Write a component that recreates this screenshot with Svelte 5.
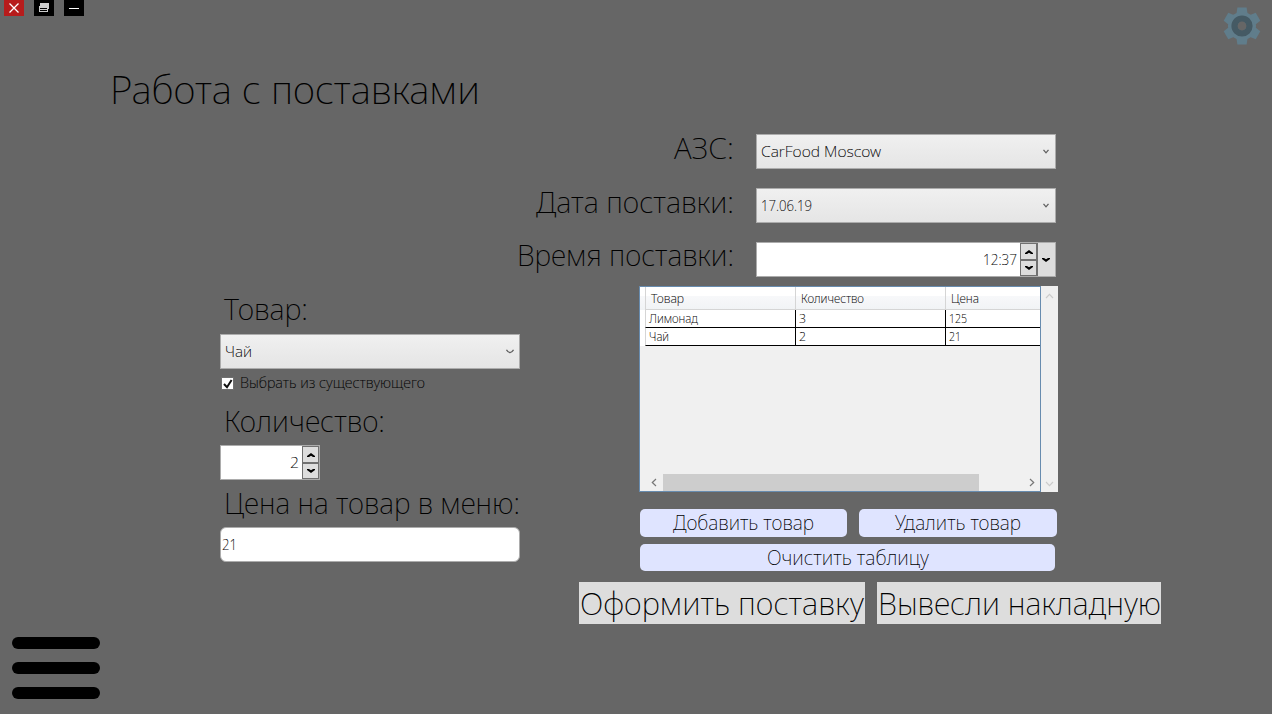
<script>
  let checked = $state(true);
  const supply = [
    { label: 'АЗС:', size: 30, width: 60, base: 25.3, value: 'CarFood Moscow', vw: 120 },
    { label: 'Дата поставки:', size: 30, width: 198, base: 25.3, value: '17.06.19', vw: 51 },
  ];
  const rows = [
    [['Лимонад', 49], ['3', 7], ['125', 18]],
    [['Чай', 20], ['2', 7], ['21', 12]],
  ];
</script>

{#snippet line(text, size, width, base, height)}
  <svg class="line" class:small={size < 16} {width} {height}><text x="0" y={base} font-size={size} textLength={width} lengthAdjust="spacingAndGlyphs">{text}</text></svg>
{/snippet}

{#snippet arrow(dir)}
  <svg class="arrow" width="8" height="4" viewBox="0 0 8 4">
    <path d={dir === 'up' ? 'M0 4V3L4 0L8 3V4H6L4 2.7L2 4Z' : 'M0 0V1L4 4L8 1V0H6L4 1.3L2 0Z'} fill="#000" />
  </svg>
{/snippet}

{#snippet spinner()}
  <div class="spin">
    <button aria-label="+">{@render arrow('up')}</button>
    <button aria-label="-">{@render arrow('down')}</button>
  </div>
{/snippet}

<div class="window">
  <header>
    <div class="controls">
      <button class="close" aria-label="×"><svg width="20" height="16"><path d="M5.5 3.5L14.5 12.5M14.5 3.5L5.5 12.5" stroke="#fff" stroke-width="1.3" /></svg></button>
      <button aria-label="□"><svg width="20" height="16"><path d="M6 3H15V9H14V12H5V6H6Z" fill="#ccc" /><path d="M6 8H13V9H6ZM6 10H13V11H6Z" fill="#000" /></svg></button>
      <button aria-label="_"><svg width="20" height="16"><path d="M5 8.5H15" stroke="#fff" /></svg></button>
    </div>
    <svg class="gear" width="38" height="38" viewBox="-19 -19 38 38">
      <g fill="#607d8b">
        <circle r="14" />
        {#each [0, 60, 120, 180, 240, 300] as a}
          <path d="M-4.6 -18.5H4.6L5.6 -12H-5.6Z" transform="rotate({a})" />
        {/each}
      </g>
      <circle r="7.3" fill="none" stroke="#455a64" stroke-width="6.6" />
      <circle r="4.4" fill="#666" />
    </svg>
  </header>

  <h1>{@render line('Работа с поставками', 39.5, 370, 44, 60)}</h1>

  <section class="supply">
    {#each supply as f}
      <div class="field">
        {@render line(f.label, f.size, f.width, f.base, 35)}
        <div class="combo">
          {@render line(f.value, 15, f.vw, 22, 33)}
          <svg class="chev" width="6" height="5"><path d="M.5 .8L3 3.8L5.5 .8" fill="none" stroke="#606060" stroke-width="1.3" /></svg>
        </div>
      </div>
    {/each}
    <div class="field">
      {@render line('Время поставки:', 30, 217, 24.3, 35)}
      <div class="time">
        {@render line('12:37', 15, 34, 22, 33)}
        {@render spinner()}
        <button class="drop" aria-label="▾">{@render arrow('down')}</button>
      </div>
    </div>
  </section>

  <div class="columns">
    <section class="product">
      <div class="label first">{@render line('Товар:', 30, 84, 34.4, 48)}</div>
      <div class="combo">
        {@render line('Чай', 15, 27, 22, 33)}
        <svg class="chev" width="8" height="5"><path d="M.5 .8Q2 3.4 4 3.6Q6 3.4 7.5 .8" fill="none" stroke="#606060" stroke-width="1.2" /></svg>
      </div>
      <button class="check" onclick={() => (checked = !checked)}>
        <span class="box">{#if checked}<svg width="12" height="12"><path d="M2 6L5 9.2L9.6 2" fill="none" stroke="#111" stroke-width="2" /></svg>{/if}</span>
        {@render line('Выбрать из существующего', 14, 185, 18, 28)}
      </button>
      <div class="label qty">{@render line('Количество:', 30, 161, 35.4, 48)}</div>
      <div class="number">
        {@render line('2', 15, 9, 22, 33)}
        {@render spinner()}
      </div>
      <div class="label">{@render line('Цена на товар в меню:', 30, 296, 34.4, 47)}</div>
      <div class="input">{@render line('21', 15, 15, 22, 33)}</div>
    </section>

    <section class="order">
      <div class="gridbox">
        <div class="grid">
          <div class="row head">
            <div class="cell">{@render line('Товар', 12, 33, 16, 22)}</div>
            <div class="cell">{@render line('Количество', 12, 63, 16, 22)}</div>
            <div class="cell">{@render line('Цена', 12, 28, 16, 22)}</div>
          </div>
          {#each rows as r}
            <div class="row">
              {#each r as [text, w]}
                <div class="cell">{@render line(text, 12, w, 13, 17)}</div>
              {/each}
            </div>
          {/each}
          <div class="hscroll">
            <svg width="6" height="9"><path d="M5 1L1.3 4.5L5 8" fill="none" stroke="#777" stroke-width="1.2" /></svg>
            <div class="track"><div class="thumb"></div></div>
            <svg width="6" height="9"><path d="M1 1L4.7 4.5L1 8" fill="none" stroke="#777" stroke-width="1.2" /></svg>
          </div>
        </div>
        <div class="vscroll">
          <svg width="9" height="6"><path d="M1 5L4.5 1.3L8 5" fill="none" stroke="#ccc" stroke-width="1.2" /></svg>
          <svg width="9" height="6"><path d="M1 1L4.5 4.7L8 1" fill="none" stroke="#ccc" stroke-width="1.2" /></svg>
        </div>
      </div>
      <div class="actions">
        <button class="add">{@render line('Добавить товар', 19.5, 141, 21.4, 28)}</button>
        <button class="remove">{@render line('Удалить товар', 19.5, 126, 21.4, 28)}</button>
        <button class="clear">{@render line('Очистить таблицу', 19.5, 162, 21.4, 27)}</button>
      </div>
      <div class="final">
        <button class="submit">{@render line('Оформить поставку', 32, 284, 32.5, 42)}</button>
        <button class="print">{@render line('Вывесли накладную', 32, 283, 32.5, 42)}</button>
      </div>
    </section>
  </div>

  <button class="burger" aria-label="≡"><i></i><i></i><i></i></button>
</div>

<style>
  :global(body) { margin: 0; background: #666; }
  * { box-sizing: border-box; }
  button { padding: 0; border: 0; background: none; font: inherit; display: flex; align-items: center; justify-content: center; }
  svg { display: block; flex: none; }
  .window { position: relative; width: 1272px; height: 714px; overflow: hidden; background: #666; font-family: "Noto Sans", "Open Sans", sans-serif; font-weight: 200; color: #000; }
  .line { overflow: visible; }
  .small { stroke: #000; stroke-width: 0.1px; }
  header { display: flex; justify-content: space-between; height: 60px; padding: 0 12px 0 4px; }
  .controls { display: flex; gap: 10px; height: 16px; }
  .controls button { width: 20px; height: 16px; background: #000; }
  .controls .close { background: #b71c1c; }
  .gear { margin: 6.5px -0.5px 0 0; }
  h1 { margin: 0; height: 74px; padding-left: 110px; font-weight: 200; }
  .supply { display: grid; gap: 19px; width: 1056px; }
  .field { display: flex; justify-content: flex-end; gap: 22px; height: 35px; }
  .combo { display: flex; justify-content: space-between; width: 300px; height: 35px; padding: 0 6px 0 4px; border: 1px solid #acacac; background: linear-gradient(#f0f0f0, #e5e5e5); }
  .product .combo { padding-right: 5px; }
  .chev { margin-top: 14px; }
  .time, .number { display: flex; justify-content: flex-end; height: 35px; border: 1px solid #acacac; background: #fff; }
  .time { width: 300px; }
  .number { width: 100px; }
  .spin { display: grid; grid-template-rows: 17px 16px; width: 17px; margin-left: 3px; background: #707070; }
  .spin button { background: #ddd; border: 1px solid #707070; }
  .drop { width: 18px; border-left: 1px solid #707070; background: #ddd; }
  .drop .arrow, .drop :global(svg) { margin-right: 1px; }
  .columns { display: flex; gap: 58px; margin: 9px 0 0 220px; }
  .product { width: 300px; }
  .label { height: 47px; padding-left: 4px; }
  .first { height: 48px; }
  .qty { height: 48px; margin-top: -1px; }
  .check { height: 29px; gap: 6px; padding-left: 1px; justify-content: flex-start; }
  .box { width: 13px; height: 13px; margin-top: -1px; border: 1px solid #707070; background: #fff; }
  .input { height: 35px; padding-left: 1px; border: 1px solid #acacac; border-radius: 6px; background: #fff; }
  .order { width: 584px; }
  .gridbox { display: flex; width: 419px; height: 206px; margin-left: 61px; }
  .grid { display: flex; flex-direction: column; width: 402px; height: 206px; border: 1px solid #688caf; background: #f0f0f0; overflow: hidden; }
  .row { display: grid; grid-template-columns: 150px 150px 95px; height: 18px; padding-left: 5px; background: #fff; }
  .cell { border-left: 1px solid #000; border-bottom: 1px solid #000; padding-left: 3px; }
  .row .cell:first-child { border-left-color: #d5d5d5; }
  .head { height: 23px; background: linear-gradient(#fff 0 40%, #f7f8fa 41%, #f1f3f5); }
  .head .cell { padding-left: 5px; border-color: #d5d5d5; }
  .hscroll { display: flex; align-items: center; height: 17px; margin-top: auto; padding: 0 5px 0 11px; }
  .track { flex: 1; height: 17px; padding-left: 6px; }
  .thumb { width: 316px; height: 17px; background: #cdcdcd; }
  .vscroll { display: flex; flex-direction: column; justify-content: space-between; align-items: center; width: 17px; padding: 7px 0 5px; background: #f0f0f0; }
  .actions { display: flex; flex-wrap: wrap; gap: 7px 12px; width: 418px; margin: 17px 0 0 62px; }
  .actions button { border-radius: 5px; background: #dfe4ff; height: 28px; }
  .actions .add { width: 207px; }
  .actions .remove { width: 198px; }
  .actions .clear { width: 415px; height: 27px; }
  .final { display: flex; gap: 12px; margin-top: 11px; }
  .final button { height: 42px; background: #ddd; }
  .submit { width: 286px; margin-left: 1px; }
  .print { width: 284px; }
  .burger { position: absolute; left: 12px; top: 637px; display: grid; gap: 13px; }
  .burger i { width: 88px; height: 12px; border-radius: 6px; background: #000; }
</style>
